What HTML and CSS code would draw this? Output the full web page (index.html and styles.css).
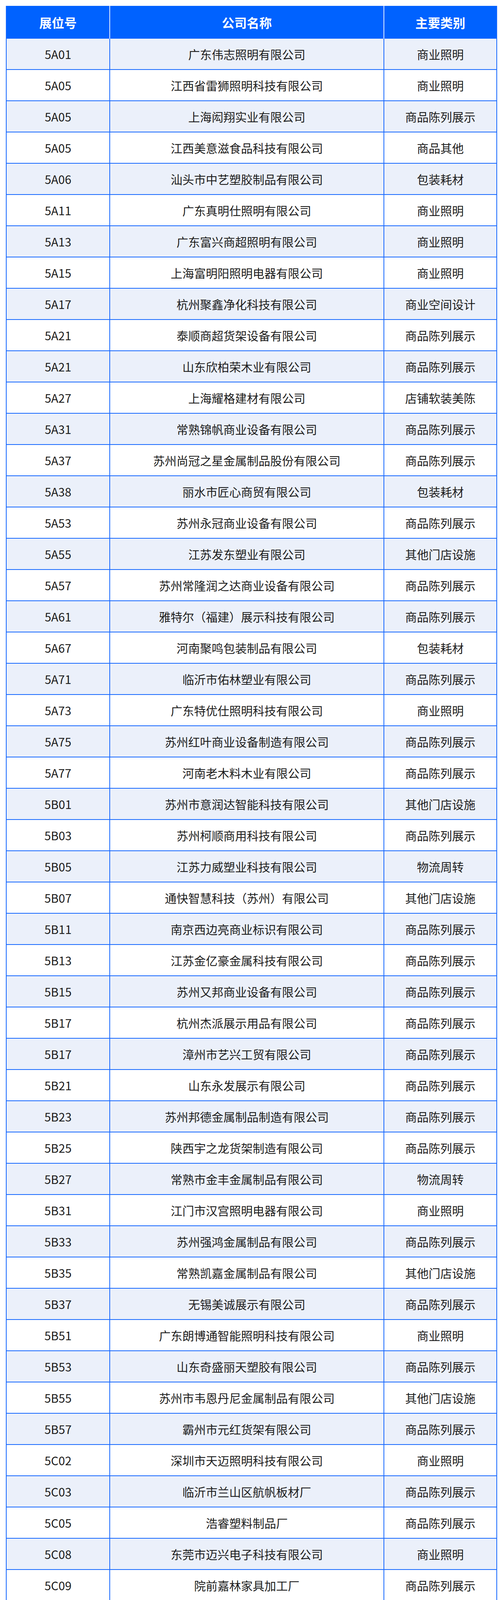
FILE: index.html
```html
<!DOCTYPE html>
<html lang="zh-CN">
<head>
<meta charset="utf-8">
<title>展商名录</title>
<link rel="stylesheet" href="styles.css">
</head>
<body>
<div class="table">
  <div class="row head">
    <div class="cell">展位号</div>
    <div class="cell">公司名称</div>
    <div class="cell">主要类别</div>
  </div>
  <div class="row odd"><div class="cell">5A01</div><div class="cell">广东伟志照明有限公司</div><div class="cell">商业照明</div></div>
  <div class="row"><div class="cell">5A05</div><div class="cell">江西省雷狮照明科技有限公司</div><div class="cell">商业照明</div></div>
  <div class="row odd"><div class="cell">5A05</div><div class="cell">上海闳翔实业有限公司</div><div class="cell">商品陈列展示</div></div>
  <div class="row"><div class="cell">5A05</div><div class="cell">江西美意滋食品科技有限公司</div><div class="cell">商品其他</div></div>
  <div class="row odd"><div class="cell">5A06</div><div class="cell">汕头市中艺塑胶制品有限公司</div><div class="cell">包装耗材</div></div>
  <div class="row"><div class="cell">5A11</div><div class="cell">广东真明仕照明有限公司</div><div class="cell">商业照明</div></div>
  <div class="row odd"><div class="cell">5A13</div><div class="cell">广东富兴商超照明有限公司</div><div class="cell">商业照明</div></div>
  <div class="row"><div class="cell">5A15</div><div class="cell">上海富明阳照明电器有限公司</div><div class="cell">商业照明</div></div>
  <div class="row odd"><div class="cell">5A17</div><div class="cell">杭州聚鑫净化科技有限公司</div><div class="cell">商业空间设计</div></div>
  <div class="row"><div class="cell">5A21</div><div class="cell">泰顺商超货架设备有限公司</div><div class="cell">商品陈列展示</div></div>
  <div class="row odd"><div class="cell">5A21</div><div class="cell">山东欣柏荣木业有限公司</div><div class="cell">商品陈列展示</div></div>
  <div class="row"><div class="cell">5A27</div><div class="cell">上海耀格建材有限公司</div><div class="cell">店铺软装美陈</div></div>
  <div class="row odd"><div class="cell">5A31</div><div class="cell">常熟锦帆商业设备有限公司</div><div class="cell">商品陈列展示</div></div>
  <div class="row"><div class="cell">5A37</div><div class="cell">苏州尚冠之星金属制品股份有限公司</div><div class="cell">商品陈列展示</div></div>
  <div class="row odd"><div class="cell">5A38</div><div class="cell">丽水市匠心商贸有限公司</div><div class="cell">包装耗材</div></div>
  <div class="row"><div class="cell">5A53</div><div class="cell">苏州永冠商业设备有限公司</div><div class="cell">商品陈列展示</div></div>
  <div class="row odd"><div class="cell">5A55</div><div class="cell">江苏发东塑业有限公司</div><div class="cell">其他门店设施</div></div>
  <div class="row"><div class="cell">5A57</div><div class="cell">苏州常隆润之达商业设备有限公司</div><div class="cell">商品陈列展示</div></div>
  <div class="row odd"><div class="cell">5A61</div><div class="cell">雅特尔（福建）展示科技有限公司</div><div class="cell">商品陈列展示</div></div>
  <div class="row"><div class="cell">5A67</div><div class="cell">河南聚鸣包装制品有限公司</div><div class="cell">包装耗材</div></div>
  <div class="row odd"><div class="cell">5A71</div><div class="cell">临沂市佑林塑业有限公司</div><div class="cell">商品陈列展示</div></div>
  <div class="row"><div class="cell">5A73</div><div class="cell">广东特优仕照明科技有限公司</div><div class="cell">商业照明</div></div>
  <div class="row odd"><div class="cell">5A75</div><div class="cell">苏州红叶商业设备制造有限公司</div><div class="cell">商品陈列展示</div></div>
  <div class="row"><div class="cell">5A77</div><div class="cell">河南老木料木业有限公司</div><div class="cell">商品陈列展示</div></div>
  <div class="row odd"><div class="cell">5B01</div><div class="cell">苏州市意润达智能科技有限公司</div><div class="cell">其他门店设施</div></div>
  <div class="row"><div class="cell">5B03</div><div class="cell">苏州柯顺商用科技有限公司</div><div class="cell">商品陈列展示</div></div>
  <div class="row odd"><div class="cell">5B05</div><div class="cell">江苏力威塑业科技有限公司</div><div class="cell">物流周转</div></div>
  <div class="row"><div class="cell">5B07</div><div class="cell">通快智慧科技（苏州）有限公司</div><div class="cell">其他门店设施</div></div>
  <div class="row odd"><div class="cell">5B11</div><div class="cell">南京西边亮商业标识有限公司</div><div class="cell">商品陈列展示</div></div>
  <div class="row"><div class="cell">5B13</div><div class="cell">江苏金亿豪金属科技有限公司</div><div class="cell">商品陈列展示</div></div>
  <div class="row odd"><div class="cell">5B15</div><div class="cell">苏州又邦商业设备有限公司</div><div class="cell">商品陈列展示</div></div>
  <div class="row"><div class="cell">5B17</div><div class="cell">杭州杰派展示用品有限公司</div><div class="cell">商品陈列展示</div></div>
  <div class="row odd"><div class="cell">5B17</div><div class="cell">漳州市艺兴工贸有限公司</div><div class="cell">商品陈列展示</div></div>
  <div class="row"><div class="cell">5B21</div><div class="cell">山东永发展示有限公司</div><div class="cell">商品陈列展示</div></div>
  <div class="row odd"><div class="cell">5B23</div><div class="cell">苏州邦德金属制品制造有限公司</div><div class="cell">商品陈列展示</div></div>
  <div class="row"><div class="cell">5B25</div><div class="cell">陕西宇之龙货架制造有限公司</div><div class="cell">商品陈列展示</div></div>
  <div class="row odd"><div class="cell">5B27</div><div class="cell">常熟市金丰金属制品有限公司</div><div class="cell">物流周转</div></div>
  <div class="row"><div class="cell">5B31</div><div class="cell">江门市汉宫照明电器有限公司</div><div class="cell">商业照明</div></div>
  <div class="row odd"><div class="cell">5B33</div><div class="cell">苏州强鸿金属制品有限公司</div><div class="cell">商品陈列展示</div></div>
  <div class="row"><div class="cell">5B35</div><div class="cell">常熟凯嘉金属制品有限公司</div><div class="cell">其他门店设施</div></div>
  <div class="row odd"><div class="cell">5B37</div><div class="cell">无锡美诚展示有限公司</div><div class="cell">商品陈列展示</div></div>
  <div class="row"><div class="cell">5B51</div><div class="cell">广东朗博通智能照明科技有限公司</div><div class="cell">商业照明</div></div>
  <div class="row odd"><div class="cell">5B53</div><div class="cell">山东奇盛丽天塑胶有限公司</div><div class="cell">商品陈列展示</div></div>
  <div class="row"><div class="cell">5B55</div><div class="cell">苏州市韦恩丹尼金属制品有限公司</div><div class="cell">其他门店设施</div></div>
  <div class="row odd"><div class="cell">5B57</div><div class="cell">霸州市元红货架有限公司</div><div class="cell">商品陈列展示</div></div>
  <div class="row"><div class="cell">5C02</div><div class="cell">深圳市天迈照明科技有限公司</div><div class="cell">商业照明</div></div>
  <div class="row odd"><div class="cell">5C03</div><div class="cell">临沂市兰山区航帆板材厂</div><div class="cell">商品陈列展示</div></div>
  <div class="row"><div class="cell">5C05</div><div class="cell">浩睿塑料制品厂</div><div class="cell">商品陈列展示</div></div>
  <div class="row odd"><div class="cell">5C08</div><div class="cell">东莞市迈兴电子科技有限公司</div><div class="cell">商业照明</div></div>
  <div class="row"><div class="cell">5C09</div><div class="cell">院前嘉林家具加工厂</div><div class="cell">商品陈列展示</div></div>
  <div class="row odd"><div class="cell">5C10</div><div class="cell">佛山市圣邦照明电器有限公司</div><div class="cell">商业照明</div></div>
  <div class="row"><div class="cell">5C11</div><div class="cell">中山长莉森智能电器有限公司</div><div class="cell">商业照明</div></div>
  <div class="row odd"><div class="cell">5C12</div><div class="cell">沈阳市于洪区灯佰客灯具照明商行</div><div class="cell">商业照明</div></div>
  <div class="row"><div class="cell">5C15</div><div class="cell">霸州市易方达五金家具有限公司</div><div class="cell">商品陈列展示</div></div>
  <div class="row odd"><div class="cell">5C16</div><div class="cell">江门市缘航电器实业有限公司</div><div class="cell">商业照明</div></div>
  <div class="row"><div class="cell">5C17</div><div class="cell">上海懿凌环境科技有限公司</div><div class="cell">商用冷链</div></div>
  <div class="row odd"><div class="cell">5C18</div><div class="cell">无锡市喜玛拉雅光电有限公司</div><div class="cell">商业照明</div></div>
  <div class="row"><div class="cell">5C20</div><div class="cell">佛山市晨虹照明电器有限公司</div><div class="cell">商业照明</div></div>
  <div class="row odd"><div class="cell">5C21</div><div class="cell">佛山市锋嘉灯饰配件有限公司</div><div class="cell">商业照明</div></div>
  <div class="row"><div class="cell">5C22</div><div class="cell">和谐光电科技（泉州）有限公司</div><div class="cell">商业照明</div></div>
  <div class="row odd"><div class="cell">5C23</div><div class="cell">中山市双喜照明有限公司</div><div class="cell">商业照明</div></div>
  <div class="row"><div class="cell">5C25</div><div class="cell">昆山宁泰环境科技有限公司</div><div class="cell">商用冷链</div></div>
  <div class="row odd"><div class="cell">5C26</div><div class="cell">江门市光星亮华有限公司</div><div class="cell">商业照明</div></div>
  <div class="row"><div class="cell">5C28</div><div class="cell">霸州晶洪五金制品有限公司</div><div class="cell">商品陈列展示</div></div>
  <div class="row odd"><div class="cell">5C29</div><div class="cell">中山市盛奥照明科技有限公司</div><div class="cell">商业照明</div></div>
  <div class="row"><div class="cell">5C30</div><div class="cell">江门市熠尚照明科技有限公司</div><div class="cell">商业照明</div></div>
  <div class="row odd"><div class="cell">5C31</div><div class="cell">中山市彩艺照明科技有限公司</div><div class="cell">商业照明</div></div>
  <div class="row"><div class="cell">5C32</div><div class="cell">山西佰特惟金属制品有限公司</div><div class="cell">商品陈列展示</div></div>
  <div class="row odd"><div class="cell">5C33</div><div class="cell">苏州玖烁商业设备有限公司</div><div class="cell">其他门店设施</div></div>
  <div class="row"><div class="cell">5C35</div><div class="cell">文安县金卓涛金属制品厂</div><div class="cell">商品陈列展示</div></div>
  <div class="row odd"><div class="cell">5C36</div><div class="cell">临沂风行光电有限公司</div><div class="cell">商业照明</div></div>
  <div class="row"><div class="cell">5C37</div><div class="cell">广东一诺德科技照明有限公司</div><div class="cell">商业照明</div></div>
  <div class="row odd"><div class="cell">5C50</div><div class="cell">中山市晨之希照明科技有限公司</div><div class="cell">商业照明</div></div>
  <div class="row"><div class="cell">5C52</div><div class="cell">河南集科商超设备有限公司</div><div class="cell">商品陈列展示</div></div>
  <div class="row odd"><div class="cell">5C53</div><div class="cell">中山市共计照明有限公司</div><div class="cell">商业照明</div></div>
  <div class="row"><div class="cell">5C55</div><div class="cell">常熟市凯力欧商业设备制造有限公司</div><div class="cell">其他门店设施</div></div>
  <div class="row odd"><div class="cell">5C56</div><div class="cell">佛山市创衍灯具配件科技有限公司</div><div class="cell">商业照明</div></div>
  <div class="row"><div class="cell">5C57</div><div class="cell">中山市卡意照明有限公司</div><div class="cell">商业照明</div></div>
  <div class="row odd"><div class="cell">5C58</div><div class="cell">广州奥瑞奥科技有限公司</div><div class="cell">商品陈列展示</div></div>
</div>
</body>
</html>
```

FILE: styles.css
```css
html, body {
  margin: 0;
  padding: 0;
  background: #ffffff;
}

body {
  padding: 15px;
  font-family: "Noto Sans CJK SC", "Noto Sans", sans-serif;
  color: #1c1c1c;
}

.table {
  width: 1258px;
  box-sizing: border-box;
  border-left: 2px solid #1668ff;
  border-right: 2px solid #1668ff;
}

.row {
  display: grid;
  grid-template-columns: 265px 702px 1fr;
  height: 80px;
  box-sizing: border-box;
  border-bottom: 2px solid #1668ff;
  background: #ffffff;
  overflow: hidden;
}

.row.odd {
  background: #ebf0fa;
}

.cell {
  display: flex;
  align-items: center;
  justify-content: center;
  font-size: 30px;
  line-height: 1;
  border-right: 2px solid #1668ff;
  white-space: nowrap;
}

.cell:last-child {
  border-right: none;
}

.row.head {
  height: 84px;
  background: #0062ff;
  border-bottom: none;
}

.row.head .cell {
  color: #ffffff;
  font-weight: 700;
  font-size: 32px;
  border-right-color: #e6eeff;
}
```
